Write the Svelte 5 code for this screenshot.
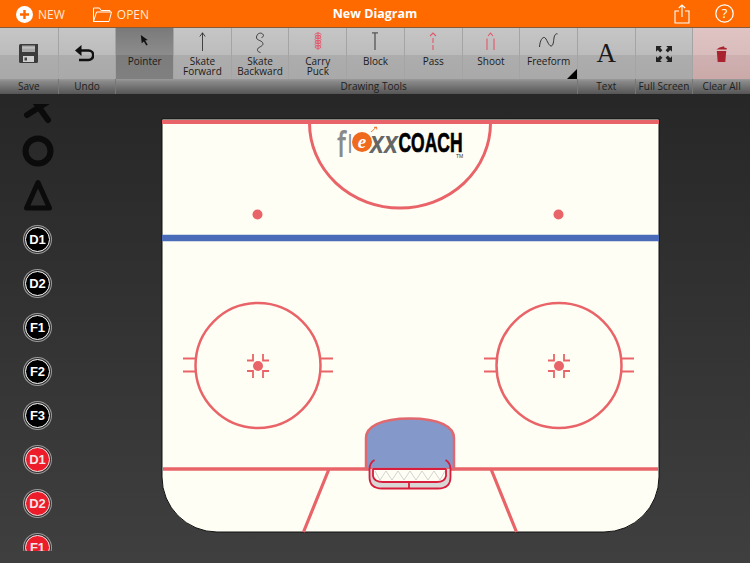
<script>
  const tools = [
    { id: 'save', label: ['Save'], hideLabel: true },
    { id: 'undo', label: ['Undo'], hideLabel: true },
    { id: 'pointer', label: ['Pointer'], active: true },
    { id: 'forward', label: ['Skate', 'Forward'] },
    { id: 'backward', label: ['Skate', 'Backward'] },
    { id: 'carry', label: ['Carry', 'Puck'] },
    { id: 'block', label: ['Block'] },
    { id: 'pass', label: ['Pass'] },
    { id: 'shoot', label: ['Shoot'] },
    { id: 'freeform', label: ['Freeform'], more: true },
    { id: 'text', label: ['Text'], hideLabel: true },
    { id: 'full', label: ['Full Screen'], hideLabel: true },
    { id: 'clear', label: ['Clear All'], hideLabel: true, danger: true }
  ];

  const groups = [
    { label: 'Save', span: 1 },
    { label: 'Undo', span: 1 },
    { label: 'Drawing Tools', span: 8, wide: true },
    { label: 'Text', span: 1 },
    { label: 'Full Screen', span: 1 },
    { label: 'Clear All', span: 1 }
  ];

  const chips = [
    { t: 'D1' }, { t: 'D2' }, { t: 'F1' }, { t: 'F2' }, { t: 'F3' },
    { t: 'D1', red: true }, { t: 'D2', red: true }, { t: 'F1', red: true }
  ];

  const circles = [258, 559];
  const coils = [2.5, 5, 7.5, 10, 12.5, 15];
</script>

<div class="app">
  <header class="nav">
    <button class="nav-btn new">
      <svg width="17" height="17" viewBox="0 0 17 17">
        <circle cx="8.5" cy="8.5" r="8.5" fill="#fff" />
        <path d="M8.5 4v9M4 8.5h9" stroke="#ff6a00" stroke-width="2.4" />
      </svg>
      NEW
    </button>
    <button class="nav-btn open">
      <svg width="19" height="15" viewBox="0 0 19 15" fill="none" stroke="#fff" stroke-width="1">
        <path d="M.5 14.5V1h6l1.500 2.500H17V5" />
        <path d="M.5 14.500h15.500L18.500 5H3.500L.5 14.500z" />
      </svg>
      OPEN
    </button>
    <h1>New Diagram</h1>
    <div class="nav-right">
      <svg width="16" height="20" viewBox="0 0 16 20" fill="none" stroke="#fff" stroke-width="1.100">
        <path d="M5 7H1v12h14V7h-4M8 13V1M4.800 4 8 1l3.200 3" />
      </svg>
      <svg width="19" height="19" viewBox="0 0 19 19" fill="none">
        <circle cx="9.500" cy="9.500" r="8.700" stroke="#fff" stroke-width="1.300" />
        <text x="9.500" y="14" text-anchor="middle" class="q">?</text>
      </svg>
    </div>
  </header>

  <div class="tools">
    {#each tools as tool}
      <button class="tool" class:active={tool.active} class:danger={tool.danger}>
        <span class="glyph">
          {#if tool.id === 'save'}
            <svg width="19" height="19" viewBox="0 0 19 19">
              <path d="M0 1.500A1.500 1.500 0 0 1 1.500 0H19v17.500a1.500 1.500 0 0 1-1.500 1.500h-16A1.500 1.500 0 0 1 0 17.500z" fill="#3c3c3c" />
              <rect x="3" y="1.500" width="13" height="6.500" fill="#a8a8a8" />
              <rect x="3" y="3.500" width="13" height=".8" fill="#d6d6d6" />
              <rect x="4" y="12" width="11" height="6" fill="#cfcfcf" />
              <rect x="5.500" y="13.500" width="2.500" height="3" fill="#444" />
            </svg>
          {:else if tool.id === 'undo'}
            <svg class="undo" width="19" height="17" viewBox="0 0 19 17" fill="none">
              <path d="M5 5.500h8.500a4.500 4.500 0 0 1 0 9.500H4" stroke="#111" stroke-width="2.600" />
              <path d="M0 5.500 6.500 0v11z" fill="#111" />
            </svg>
          {:else if tool.id === 'pointer'}
            <svg class="top pointer" width="9" height="11" viewBox="0 0 9 12">
              <path d="M.5 0 8 5.500 5.200 6 8 10.500 6.500 11.500 3.800 7 1.500 9z" fill="#111" />
            </svg>
          {:else if tool.id === 'forward'}
            <svg class="top" width="7" height="19" viewBox="0 0 7 19" fill="none" stroke="#222" stroke-width=".8">
              <path d="M3.500 19V.8M.8 4.500 3.500.8l2.700 3.700" />
            </svg>
          {:else if tool.id === 'backward'}
            <svg class="top" width="10" height="21" viewBox="0 0 10 21" fill="none" stroke="#222" stroke-width=".8">
              <path d="M5.500 20.500C2 20 1.500 17 4 15.500s5-2.500 3.500-5S1 8.500 1.500 5 5 .500 7 1.500 9 5 6.500 5.500" />
            </svg>
          {:else if tool.id === 'carry'}
            <svg class="top" width="8" height="18" viewBox="0 0 8 18" fill="none" stroke="#e4566a" stroke-width=".9">
              <path d="M4 0v18" />
              {#each coils as y}
                <ellipse cx="4" cy={y} rx="3" ry="1.400" />
              {/each}
            </svg>
          {:else if tool.id === 'block'}
            <svg class="top" width="8" height="18" viewBox="0 0 8 18" fill="none" stroke="#555" stroke-width="1.300">
              <path d="M4 18V1M1 .8h6" />
            </svg>
          {:else if tool.id === 'pass'}
            <svg class="top" width="8" height="18" viewBox="0 0 8 18" fill="none" stroke="#e4566a" stroke-width="1.100">
              <path d="M4 18V5" stroke-dasharray="5 2" />
              <path d="M1 4 4 1l3 3" />
            </svg>
          {:else if tool.id === 'shoot'}
            <svg class="top" width="9" height="18" viewBox="0 0 9 18" fill="none" stroke="#e4566a" stroke-width="1.100">
              <path d="M1 18V6.500M8 18V6.500M2 4 4.500 1 7 4" />
            </svg>
          {:else if tool.id === 'freeform'}
            <svg class="top" width="19" height="16" viewBox="0 0 19 16" fill="none" stroke="#222" stroke-width=".9">
              <path d="M.5 15C1 8 3.500 5 5.500 5.500s4 8.500 6.500 8.500 2.500-5 3-8 2-5 3.500-4" />
            </svg>
          {:else if tool.id === 'text'}
            <span class="big-a">A</span>
          {:else if tool.id === 'full'}
            <svg width="16" height="16" viewBox="0 0 15 15" fill="#222">
              <path d="M0 0h5.500L3.800 1.700 6 3.900 3.900 6 1.700 3.800 0 5.500zM15 0v5.500l-1.700-1.700L11.100 6 9 3.900l2.200-2.200L9.500 0zM0 15V9.500l1.700 1.700L3.900 9 6 11.100l-2.200 2.200L5.500 15zM15 15H9.500l1.700-1.700L9 11.100 11.100 9l2.200 2.200L15 9.500z" />
            </svg>
          {:else if tool.id === 'clear'}
            <svg width="11" height="16" viewBox="0 0 11 16" fill="#a9232f">
              <path d="M.3 3.600 3.500 1.400 8 .3l.5 1.400 2.200.4v1.500z" />
              <path d="M.8 5h9.400l-.9 11H1.700z" />
            </svg>
          {/if}
        </span>
        {#if !tool.hideLabel}
          <span class="label">
            {#each tool.label as line}<span>{line}</span>{/each}
          </span>
        {/if}
        {#if tool.more}<i class="more"></i>{/if}
      </button>
    {/each}
  </div>

  <div class="captions">
    {#each groups as g}
      <span class:wide={g.wide} style="grid-column: span {g.span}">{g.label}</span>
    {/each}
  </div>

  <main class="board">
    <aside class="palette">
      <svg class="shape x" width="32" height="25" viewBox="0 0 32 25" fill="none" stroke="#0b0b0b" stroke-width="6" stroke-linecap="round">
        <path d="M5 11 30-5M6-12 26 16" />
      </svg>
      <svg class="shape" width="32" height="32" viewBox="0 0 32 32" fill="none">
        <circle cx="16" cy="16" r="12.500" stroke="#0b0b0b" stroke-width="6" />
      </svg>
      <svg class="shape" width="32" height="32" viewBox="0 0 32 32" fill="none">
        <path d="M16 3.500 27.500 29H4.500z" stroke="#0b0b0b" stroke-width="5" stroke-linejoin="round" />
      </svg>
      {#each chips as c}
        <span class="chip-wrap"><span class="chip" class:red={c.red}>{c.t}</span></span>
      {/each}
    </aside>

    <svg class="rink" width="499" height="415" viewBox="161 117 499 415">
      <path d="M162 118H659V476a55 55 0 0 1-55 55H217a55 55 0 0 1-55-55z" fill="#fffef5" stroke="#111" stroke-width="1" />
      <g fill="none" stroke="#e96468">
        <path d="M162 121H659" stroke-width="4" />
        <path d="M309.500 122a90.500 85 0 0 0 181 0" stroke-width="3" />
        <path d="M163 468H658" stroke-width="3.500" />
        <path d="M329 468 303.500 531M491 468 516.500 531" stroke-width="3.200" />
        {#each circles as cx}
          <circle {cx} cy="364.500" r="62.500" stroke-width="2.500" />
          <path d="M{cx - 75} 357.500H{cx - 62}M{cx - 75} 370.500H{cx - 62}M{cx + 62} 357.500H{cx + 75}M{cx + 62} 370.500H{cx + 75}" stroke-width="2" />
          <path d="M{cx - 11} 359.500H{cx - 5}V353M{cx + 11} 359.500H{cx + 5}V353M{cx - 11} 370H{cx - 5}V377M{cx + 11} 370H{cx + 5}V377" stroke-width="1.800" />
        {/each}
      </g>
      <path d="M162 237H659" stroke="#4a6cb8" stroke-width="6.500" />
      <circle cx="257.500" cy="213.500" r="5" fill="#e96468" />
      <circle cx="558.500" cy="213.500" r="5" fill="#e96468" />
      {#each circles as cx}
        <circle {cx} cy="365" r="5" fill="#e96468" />
      {/each}

      <!-- crease -->
      <path d="M366 468V437C366 426 380 417.500 410 417.500S454 426 454 437V468z" fill="#8498c9" stroke="#e0686e" stroke-width="2.500" />
      <!-- net -->
      <path d="M370 468V477Q370 487 382 487H438Q450 487 450 477V468z" fill="#d9d7d6" />
      <path d="M373 468V475Q374 481 383 481H437Q445 481 446 475V468z" fill="#fffef5" />
      <path d="M375 470 380 479 386 470 392 479 398 470 404 479 410 470 416 479 422 470 428 479 434 470 440 479 445 470" fill="none" stroke="#c8c6c4" stroke-width=".8" />
      <path d="M374.500 459Q369.500 462 369.500 468V476Q369.500 487.500 382 487.500H438Q450.500 487.500 450.500 476V468Q450.500 462 445.500 459M373 468H446M373 468V475Q374 481 383 481H437Q445 481 446 475V468M409 481V487" fill="none" stroke="#d81e3c" stroke-width="1.800" />

      <!-- logo -->
      <text x="337" y="156" class="logo-f" textLength="9" lengthAdjust="spacingAndGlyphs">f</text>
      <text x="348" y="152" class="logo-l" textLength="4" lengthAdjust="spacingAndGlyphs">l</text>
      <text x="370" y="151.500" class="logo-xx" textLength="28" lengthAdjust="spacingAndGlyphs">xx</text>
      <circle cx="362" cy="141" r="10" fill="#ef6a1c" />
      <text x="362" y="147" class="logo-e">e</text>
      <path d="M371 131q3-2 5-5m-2 .5 2.500-.5 .3 2.500" fill="none" stroke="#ef6a1c" stroke-width=".9" />
      <text x="398.500" y="151" class="logo-coach" textLength="64" lengthAdjust="spacingAndGlyphs">COACH</text>
      <text x="456" y="157" class="logo-tm">TM</text>
    </svg>
  </main>
</div>

<style>
  :global(body) {
    margin: 0;
    background: #333;
  }

  .app {
    width: 750px;
    height: 563px;
    overflow: hidden;
    display: flex;
    flex-direction: column;
    font-family: "Open Sans", "Liberation Sans", sans-serif;
    background: linear-gradient(#222222, #403f3f);
  }

  button {
    appearance: none;
    border: none;
    background: none;
    padding: 0;
    font: inherit;
    color: inherit;
  }

  .nav {
    position: relative;
    flex: 0 0 28px;
    display: flex;
    align-items: center;
    background: #ff6a00;
    color: #fff;
    box-sizing: border-box;
    border-bottom: 1px solid #8a5a34;
  }

  .nav-btn {
    display: flex;
    align-items: center;
    font-size: 12px;
    color: #ffe9d8;
    padding-top: 1px;
  }

  .new {
    gap: 5px;
    margin-left: 16px;
  }

  .open {
    gap: 5px;
    margin-left: 28px;
  }

  .nav h1 {
    position: absolute;
    left: 0;
    right: 0;
    margin: 0;
    text-align: center;
    font-size: 12.500px;
    font-weight: 700;
    pointer-events: none;
  }

  .nav-right {
    margin-left: auto;
    margin-right: 16px;
    display: flex;
    align-items: center;
    gap: 25px;
  }

  .q {
    font-size: 13px;
    fill: #fff;
    font-family: "Open Sans", sans-serif;
  }

  .tools {
    flex: 0 0 51px;
    display: grid;
    grid-template-columns: repeat(13, 1fr);
    background: linear-gradient(#c6c6c6 0, #bcbcbc 52%, #adadad 53%, #a9a9a9 100%);
  }

  .tool {
    position: relative;
    display: flex;
    flex-direction: column;
    align-items: center;
    border-left: 1px solid #a4a4a4;
    color: #1a1a1a;
    box-sizing: border-box;
    overflow: hidden;
  }

  .tool:first-child {
    border-left: none;
  }

  .tool.active {
    background: linear-gradient(#7a7a7a, #8c8c8c 52%, #7c7c7c 53%, #808080);
  }

  .tool.danger {
    background: linear-gradient(#e0c3c3, #d9bcbc 52%, #cfb0b0 53%, #cba9a9);
  }

  .glyph {
    flex: 1;
    display: flex;
    align-items: center;
    justify-content: center;
  }

  .glyph .top {
    align-self: flex-start;
    margin-top: 4px;
  }

  .glyph .pointer {
    margin-top: 7px;
  }

  .glyph .undo {
    margin-right: 6px;
  }

  .tool:has(.label) .glyph {
    flex: 0 0 28px;
  }

  .label {
    display: flex;
    flex-direction: column;
    align-items: center;
    font-size: 10px;
    line-height: 10px;
  }

  .big-a {
    font-family: "Liberation Serif", serif;
    font-size: 27px;
    line-height: 1;
  }

  .more {
    position: absolute;
    right: 0;
    bottom: 0;
    width: 0;
    height: 0;
    border-left: 10px solid transparent;
    border-bottom: 10px solid #000;
  }

  .captions {
    flex: 0 0 14px;
    display: grid;
    grid-template-columns: repeat(13, 1fr);
    background: linear-gradient(#9a9a9a, #8a8a8a 15%, #555);
  }

  .captions span {
    font-size: 10px;
    line-height: 15px;
    text-align: center;
    color: #1d1d1d;
    border-left: 1px solid #777;
    white-space: nowrap;
  }

  .captions span:first-child {
    border-left: none;
  }

  .captions .wide {
    padding-left: 54px;
  }

  .board {
    flex: 1;
    display: flex;
    align-items: flex-start;
  }

  .palette {
    flex: 0 0 75px;
    height: 447px;
    margin-top: 10px;
    overflow: hidden;
    display: flex;
    flex-direction: column;
    align-items: center;
  }

  .shape {
    flex: 0 0 44px;
    height: 44px;
  }

  .shape.x {
    flex-basis: 25px;
    height: 25px;
    overflow: hidden;
  }

  .chip-wrap {
    flex: 0 0 44px;
    display: flex;
    align-items: center;
    justify-content: center;
  }

  .chip {
    width: 25px;
    height: 25px;
    box-sizing: border-box;
    border-radius: 50%;
    display: flex;
    align-items: center;
    justify-content: center;
    background: #000;
    color: #fff;
    border: 1.500px solid #fff;
    box-shadow: 0 0 0 1px #333, 0 0 0 2px #9a9a9a;
    font: 700 13px "Liberation Sans", sans-serif;
  }

  .chip.red {
    background: #ed1c2a;
    color: #f3e6e6;
    border-color: #f1eaea;
  }

  .rink {
    flex: none;
    margin: 24px 0 0 86px;
  }

  .logo-f {
    font: 600 36px "Open Sans", sans-serif;
    fill: #8a8a8a;
  }

  .logo-l {
    font: 600 25px "Open Sans", sans-serif;
    fill: #8a8a8a;
  }

  .logo-e {
    font: italic 700 19px "Liberation Serif", serif;
    fill: #fff;
    text-anchor: middle;
  }

  .logo-xx {
    font: italic 700 32px "Liberation Sans", sans-serif;
    fill: #666;
  }

  .logo-coach {
    font: 700 27px "Liberation Sans", sans-serif;
    fill: #000;
    stroke: #000;
    stroke-width: .7px;
  }

  .logo-tm {
    font: 5px "Liberation Sans", sans-serif;
    fill: #333;
  }
</style>
